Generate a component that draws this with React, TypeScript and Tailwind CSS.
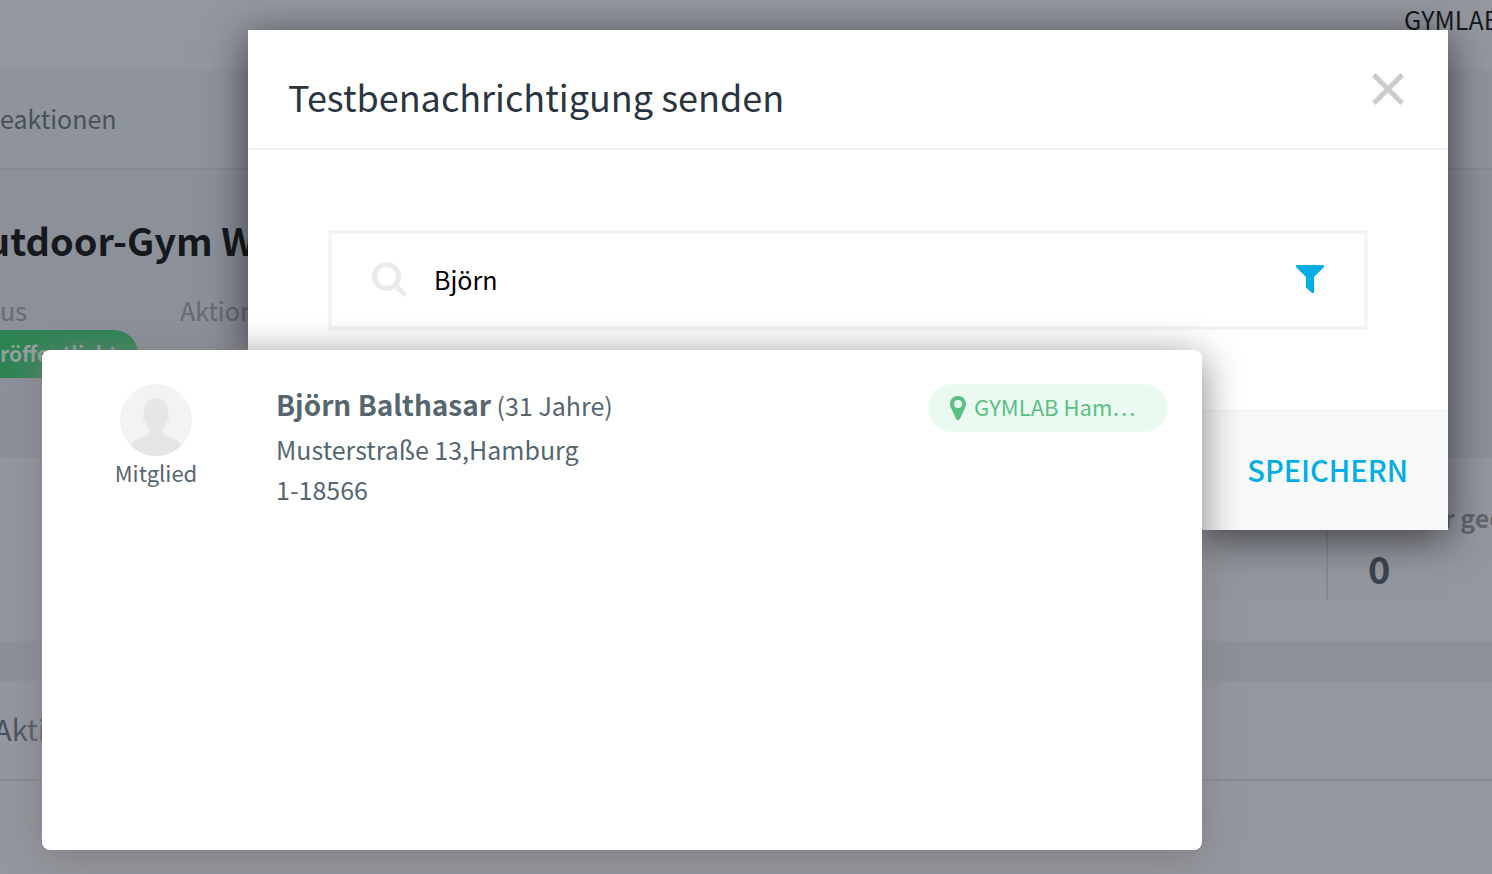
import React, {useState} from 'react';

type IconProps = {
    className?: string
}

const CloseIcon: React.FC<IconProps> = ({className}) => (
    <svg viewBox="0 0 32 32" className={className} fill="none" stroke="currentColor" strokeWidth="5">
        <path d="M1.800 1.800L30.200 30.200M30.200 1.800L1.800 30.200"/>
    </svg>
)

const SearchIcon: React.FC<IconProps> = ({className}) => (
    <svg viewBox="0 0 36 36" className={className} fill="none" stroke="currentColor" strokeWidth="5">
        <circle cx="14.5" cy="14.5" r="12"/>
        <path d="M23 23L33.500 33.500"/>
    </svg>
)

const FilterIcon: React.FC<IconProps> = ({className}) => (
    <svg viewBox="0 0 28 28" className={className} fill="currentColor">
        <path d="M1 0H27Q28 0 28 1V2L18 12V27.500Q17.300 28.700 16 28L10.500 23Q10 22.500 10 22V12L0 2V1Q0 0 1 0Z"/>
    </svg>
)

const PinIcon: React.FC<IconProps> = ({className}) => (
    <svg viewBox="0 0 16 24" className={className} fill="currentColor">
        <path
            fillRule="evenodd"
            d="M8 0C3.400 0 0 3.500 0 8C0 10 .7 11.300 1.300 12.600L6 22.700C6.800 24.400 9.200 24.400 10 22.700L14.700 12.600C15.300 11.300 16 10 16 8C16 3.500 12.600 0 8 0ZM8 4A4 4 0 1 1 8 12A4 4 0 1 1 8 4Z"
        />
    </svg>
)

const Avatar: React.FC<IconProps> = ({className}) => (
    <svg viewBox="0 0 72 72" className={className}>
        <circle cx="36" cy="36" r="36" fill="#f3f3f3"/>
        <path
            fill="#e6e6e6"
            d="M36 14C28.500 14 24.500 19.500 24.500 27C24.500 28.500 23 29.500 23 32.500C23 35.500 24.500 37.500 25.500 38.500C26.500 42 28 44.500 29.500 46C29.500 50 29 50.500 26 51.500C20 53.500 13.500 55.500 11 62A36 36 0 0 0 61 62C58.500 55.500 52 53.500 46 51.500C43 50.500 42.500 50 42.500 46C44 44.500 45.500 42 46.500 38.500C47.500 37.500 49 35.500 49 32.500C49 29.500 47.500 28.500 47.500 27C47.500 19.500 43.500 14 36 14Z"
        />
    </svg>
)

const Page: React.FC = () => (
    <div className="h-screen overflow-hidden whitespace-nowrap bg-[#8c9099]">
        <header className="flex h-[70px] justify-end bg-[#94979f]">
            <p className="w-[88px] text-[25px] leading-[38px] text-[#15191e]">GYMLAB</p>
        </header>
        <nav className="flex h-[100px] items-center border-b-2 border-[#858b92] bg-[#8f949b] pb-0.5">
            <a href="#aktionen" className="text-[25px] leading-10 text-[#485159]">eaktionen</a>
        </nav>
        <section className="h-72 pt-[38px]">
            <h1 className="-ml-3.5 text-[38px] font-bold leading-16 text-[#15191e]">utdoor-Gym W</h1>
            <div className="mt-[18px] flex text-[25px] leading-10 text-[#666b74]">
                <div className="w-[180px]">
                    <p>us</p>
                    <p className="h-12 w-[138px] rounded-r-full bg-[#2b8352] text-[21px] font-bold leading-[46px] text-[#94a09f]">
                        röffentlicht
                    </p>
                </div>
                <p>Aktion</p>
            </div>
        </section>
        <section className="flex h-[183px] justify-end bg-[#94979f] py-10">
            <div className="w-[166px] border-l-2 border-[#858b92] pl-10">
                <p className="text-[25px] font-bold leading-[38px] text-[#5f666e]">Wieder geöffnet</p>
                <p className="text-[38px] font-bold leading-16 text-[#3c444e]">0</p>
            </div>
        </section>
        <section className="mt-10 h-full bg-[#94979f]">
            <h2 className="-ml-1.5 border-b-2 border-[#858b92] pb-1 text-[29px] leading-[94px] text-[#485159]">Aktionen</h2>
        </section>
    </div>
)

const MemberList: React.FC = () => (
    <ul className="absolute top-80 right-[246px] -left-[206px] h-[500px] rounded-lg bg-white px-[34px] pt-[34px] text-[#56666e] shadow-[0_8px_40px_#808080]">
        <li className="flex items-start gap-10">
            <div className="flex w-40 flex-col items-center">
                <Avatar className="size-[72px]"/>
                <p className="text-[22px] leading-8">Mitglied</p>
            </div>
            <div className="flex-1 text-[25px] leading-10">
                <p className="pb-1"><b className="text-[28px] leading-10">Björn Balthasar</b> (31 Jahre)</p>
                <p>Musterstraße 13,Hamburg</p>
                <p>1-18566</p>
            </div>
            <div className="flex h-12 w-60 items-center gap-2 rounded-full bg-[#eafaf1] px-[22px] text-[22px] text-[#5bbf83]">
                <PinIcon className="h-6 w-4"/>
                <span className="pb-1">GYMLAB Ham…</span>
            </div>
        </li>
    </ul>
)

export default function App() {
    const [search, setSearch] = useState('Björn')

    return (
        <div className="relative font-['Noto_Sans_CJK_SC','Noto_Sans',sans-serif]">
            <Page/>
            <div className="absolute inset-0 overflow-hidden pt-[30px] pr-11 pl-[248px]">
                <div role="dialog" aria-labelledby="title" className="relative bg-white shadow-[0_8px_40px_rgba(0,0,0,0.6)]">
                    <div className="flex h-[120px] items-center justify-between border-b-2 border-[#f2f3f5] px-10">
                        <h2 id="title" className="pt-3.5 text-[36px] leading-12 text-[#2b353f]">
                            Testbenachrichtigung senden
                        </h2>
                        <button aria-label="Schließen" className="px-1 text-[#cccccc]">
                            <CloseIcon className="size-8"/>
                        </button>
                    </div>
                    <div className="p-20">
                        <div className="flex h-[100px] items-center border-4 border-[#f2f4f6] px-10">
                            <SearchIcon className="size-9 text-[#e8eaec]"/>
                            <input
                                aria-label="Suche"
                                className="ml-[26px] min-w-0 flex-1 pb-0.5 text-[25px] leading-10 text-black outline-none"
                                value={search}
                                onChange={(e) => setSearch(e.target.value)}
                            />
                            <button aria-label="Filter" className="pb-0.5 text-[#00aee3]">
                                <FilterIcon className="size-7"/>
                            </button>
                        </div>
                    </div>
                    <div className="flex h-[120px] items-center justify-end border-t-2 border-[#f2f3f5] bg-[#f8f9fb] px-10 pb-1">
                        <button className="text-[29px] font-medium leading-10 text-[#00aee3]">SPEICHERN</button>
                    </div>
                    <MemberList/>
                </div>
            </div>
        </div>
    )
}
